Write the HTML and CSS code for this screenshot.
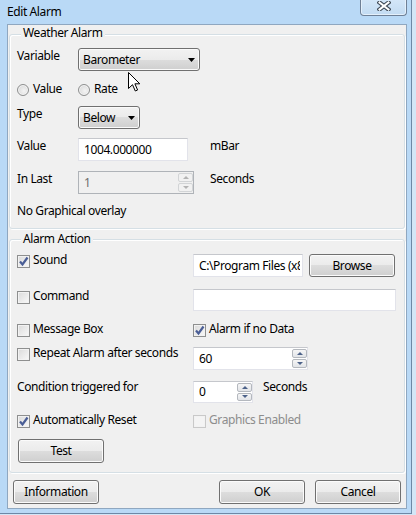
FILE: index.html
```html
<!DOCTYPE html>
<html>
<head>
<meta charset="utf-8">
<title>Edit Alarm</title>
<link rel="stylesheet" href="styles.css">
</head>
<body>
<div class="window">
  <div class="titlebar">
    <span class="title">Edit Alarm</span>
    <span class="close">
      <svg width="14" height="10" viewBox="0 0 14 10"><path d="M2.5 1.5 L11.5 8.5 M11.5 1.5 L2.5 8.5" stroke="#3f4a57" stroke-width="4.2" stroke-linecap="square" fill="none"/><path d="M2.5 1.5 L11.5 8.5 M11.5 1.5 L2.5 8.5" stroke="#ffffff" stroke-width="2" stroke-linecap="square" fill="none"/></svg>
    </span>
  </div>
  <div class="client">
    <div class="group g1">
      <div class="legend">Weather Alarm</div>
      <div class="row r-var">
        <span class="lbl">Variable</span>
        <div class="combo combo-wide"><span class="combo-text">Barometer</span><svg class="arrow" width="7" height="4" viewBox="0 0 7 4"><path d="M0 0 H7 L3.5 4 Z" fill="#000"/></svg></div>
      </div>
      <div class="row r-radio">
        <span class="lbl radio-item"><span class="radio"></span>Value</span>
        <span class="radio-item"><span class="radio"></span>Rate</span>
      </div>
      <div class="row r-type">
        <span class="lbl">Type</span>
        <div class="combo combo-small"><span class="combo-text">Below</span><svg class="arrow" width="7" height="4" viewBox="0 0 7 4"><path d="M0 0 H7 L3.5 4 Z" fill="#000"/></svg></div>
      </div>
      <div class="row r-val">
        <span class="lbl">Value</span>
        <div class="ctl-col"><div class="textbox tb-value">1004.000000</div></div>
        <span class="unit">mBar</span>
      </div>
      <div class="row r-last">
        <span class="lbl">In Last</span>
        <div class="ctl-col">
          <div class="spin spin-last disabled">
            <span class="spin-val">1</span>
            <span class="spin-btns"><span class="sb"><i class="tri up"></i></span><span class="sb"><i class="tri down"></i></span></span>
          </div>
        </div>
        <span class="unit">Seconds</span>
      </div>
      <div class="row r-nog">
        <span class="plain">No Graphical overlay</span>
      </div>
    </div>

    <div class="group g2">
      <div class="legend">Alarm Action</div>
      <div class="row r-sound">
        <span class="lcol check-item"><span class="check on"><svg width="11" height="11" viewBox="0 0 11 11"><path d="M2 5.5 L4.5 8.5 L9.5 1.5" stroke="#4a5e96" stroke-width="2.2" fill="none"/></svg></span>Sound</span>
        <div class="textbox tb-sound"><span class="clip">C:\Program Files (x86)</span></div>
        <span class="btn btn-browse">Browse</span>
      </div>
      <div class="row r-cmd">
        <span class="lcol check-item"><span class="check"></span>Command</span>
        <div class="textbox tb-cmd"></div>
      </div>
      <div class="row r-msg">
        <span class="lcol check-item"><span class="check"></span>Message Box</span>
        <span class="check-item"><span class="check on"><svg width="11" height="11" viewBox="0 0 11 11"><path d="M2 5.5 L4.5 8.5 L9.5 1.5" stroke="#4a5e96" stroke-width="2.2" fill="none"/></svg></span>Alarm if no Data</span>
      </div>
      <div class="row r-rep">
        <span class="lcol check-item"><span class="check"></span>Repeat Alarm after seconds</span>
        <div class="spin spin-rep">
          <span class="spin-val">60</span>
          <span class="spin-btns"><span class="sb"><i class="tri up"></i></span><span class="sb"><i class="tri down"></i></span></span>
        </div>
      </div>
      <div class="row r-cond">
        <span class="lcol">Condition triggered for</span>
        <div class="spin spin-cond">
          <span class="spin-val">0</span>
          <span class="spin-btns"><span class="sb"><i class="tri up"></i></span><span class="sb"><i class="tri down"></i></span></span>
        </div>
        <span class="unit2">Seconds</span>
      </div>
      <div class="row r-auto">
        <span class="lcol check-item"><span class="check on"><svg width="11" height="11" viewBox="0 0 11 11"><path d="M2 5.5 L4.5 8.5 L9.5 1.5" stroke="#4a5e96" stroke-width="2.2" fill="none"/></svg></span>Automatically Reset</span>
        <span class="check-item disabled-text"><span class="check dis"></span>Graphics Enabled</span>
      </div>
      <span class="btn btn-test">Test</span>
    </div>

    <div class="actions">
      <span class="btn">Information</span>
      <span class="spacer"></span>
      <span class="btn">OK</span>
      <span class="btn btn-cancel">Cancel</span>
    </div>
  </div>

  <svg class="cursor" width="13" height="20" viewBox="0 0 13 20"><path d="M0.5 0.5 L0.5 16.5 L4.5 12.7 L7.3 19 L9.6 18 L6.9 11.8 L11.8 11.8 Z" fill="#fff" stroke="#000" stroke-width="1" stroke-linejoin="miter"/></svg>
</div>
</body>
</html>
```

FILE: styles.css
```css
html, body {
  margin: 0;
  padding: 0;
}
body {
  background: #d3e6f7;
  font-family: "Noto Sans", "Open Sans", sans-serif;
  font-size: 12px;
  letter-spacing: -0.4px;
  color: #000;
}
.window {
  position: relative;
  width: 412px;
  height: 514px;
  box-sizing: border-box;
  background: #b9d9f6;
  border-right: 1px solid #6d88a6;
  border-bottom: 1px solid #6d88a6;
  display: flex;
  flex-direction: column;
}
.titlebar {
  height: 24px;
  flex: none;
  display: flex;
  justify-content: space-between;
  align-items: flex-start;
  padding: 0 4px 0 7px;
}
.title {
  line-height: 16px;
  margin-top: 4px;
}
.close {
  width: 47px;
  height: 16px;
  box-sizing: border-box;
  border: 1px solid #6f8096;
  border-top: none;
  border-radius: 0 0 4px 4px;
  background: linear-gradient(#d3e6f8, #c2dbf2);
  box-shadow: inset 0 -1px 0 #e4f0fb, inset 1px 0 0 #e4f0fb, inset -1px 0 0 #e4f0fb;
  display: flex;
  justify-content: center;
  align-items: flex-start;
  padding-top: 1px;
}
.client {
  margin-left: 7px;
  width: 400px;
  height: 485px;
  box-sizing: border-box;
  border: 1px solid #8fa7c0;
  background: #f0f0f0;
  padding-top: 9px;
  display: flex;
  flex-direction: column;
}
.group {
  margin: 0 1px;
  border: 1px solid #d5dfe5;
  border-radius: 3px;
  padding: 0 7px 9px 7px;
  box-shadow: inset 1px 1px 0 #fff, 1px 1px 0 #fff;
}
.g2 {
  margin-top: 10px;
}
.legend {
  width: max-content;
  margin: -10px 0 0 4px;
  padding: 0 2px;
  background: #f0f0f0;
  line-height: 16px;
  height: 15px;
}
.g2 .legend {
  margin-top: -9px;
}
.row {
  display: flex;
  align-items: flex-start;
}
.lbl {
  width: 61px;
  flex: none;
  line-height: 16px;
}
.plain, .unit, .unit2 {
  line-height: 16px;
}
.ctl-col {
  width: 132px;
  flex: none;
}
/* group 1 rows */
.r-var { margin-top: 8px; }
.r-radio { margin-top: 10px; }
.r-type { margin-top: 9px; }
.r-val { margin-top: 9px; }
.r-last { margin-top: 10px; }
.r-nog { margin-top: 9px; }

/* combo */
.combo {
  height: 23px;
  box-sizing: border-box;
  border: 1px solid #707070;
  border-radius: 3px;
  background: linear-gradient(#f2f2f2 0%, #ebebeb 50%, #dddddd 50%, #cfcfcf 100%);
  box-shadow: inset 0 0 0 1px #fafafa;
  display: flex;
  align-items: center;
  padding: 0 4px 0 4px;
}
.combo-wide { width: 122px; }
.combo-small { width: 62px; }
.combo-text {
  flex: 1;
  line-height: 16px;
}
.arrow {
  flex: none;
  margin-top: 1px;
}

/* radio */
.radio-item {
  display: flex;
  align-items: flex-start;
  line-height: 16px;
}
.radio {
  width: 12px;
  height: 12px;
  box-sizing: border-box;
  border-radius: 50%;
  border: 1px solid #8e8f8f;
  background: radial-gradient(circle at 60% 60%, #f4f4f4 0%, #dcdcdc 70%, #cfcfcf 100%);
  box-shadow: inset 0 0 0 1px #f5f5f5;
  margin: 3px 4px 0 0;
  flex: none;
}

/* textbox */
.textbox {
  height: 23px;
  box-sizing: border-box;
  border: 1px solid #e2e3ea;
  border-top-color: #c5c7cc;
  background: #fff;
  display: flex;
  align-items: center;
  padding-left: 5px;
  line-height: 16px;
  overflow: hidden;
  white-space: nowrap;
}
.tb-value { width: 110px; }
.tb-sound {
  width: 110px;
  margin-top: 2px;
  padding-right: 2px;
}
.clip {
  display: block;
  flex: 1;
  min-width: 0;
  overflow: hidden;
  white-space: nowrap;
}
.tb-cmd {
  width: 203px;
  height: 22px;
  margin-top: 1px;
}

/* spin */
.spin {
  height: 23px;
  box-sizing: border-box;
  border: 1px solid #e2e3ea;
  border-top-color: #c5c7cc;
  background: #fff;
  display: flex;
  align-items: stretch;
}
.spin.disabled {
  background: #f0f0f0;
  border-color: #afb3b8;
  color: #6d6d6d;
}
.spin-last { width: 116px; }
.spin-rep { width: 115px; margin-top: 2px; }
.spin-cond { width: 60px; height: 22px; margin-top: 2px; }
.spin-val {
  flex: 1;
  padding-left: 5px;
  line-height: 16px;
  align-self: center;
}
.spin-btns {
  width: 15px;
  flex: none;
  display: flex;
  flex-direction: column;
  gap: 1px;
  padding: 1px 0 1px 0;
}
.sb {
  flex: 1;
  box-sizing: border-box;
  border: 1px solid #b4b8be;
  border-radius: 2px;
  background: linear-gradient(#f6f6f6, #e2e4e8);
  display: flex;
  justify-content: center;
  align-items: center;
}
.disabled .sb {
  border-color: #d2d4d6;
  background: #f1f1f1;
}
.tri {
  width: 0;
  height: 0;
  border-left: 3px solid transparent;
  border-right: 3px solid transparent;
}
.tri.up { border-bottom: 3px solid #4d6289; }
.tri.down { border-top: 3px solid #4d6289; }
.disabled .tri.up { border-bottom-color: #b3b3b3; }
.disabled .tri.down { border-top-color: #b3b3b3; }

.unit2 { margin-left: 10px; }

/* group 2 */
.lcol {
  width: 176px;
  flex: none;
  line-height: 16px;
}
.check-item {
  display: flex;
  align-items: flex-start;
  line-height: 16px;
}
.check {
  width: 13px;
  height: 13px;
  box-sizing: border-box;
  border: 1px solid #8e8f8f;
  background: linear-gradient(135deg, #dadada, #f9f9f9);
  box-shadow: inset 0 0 0 1px #f2f2f2;
  margin: 3px 3px 0 0;
  flex: none;
  display: flex;
  justify-content: center;
  align-items: center;
}
.check.dis {
  border-color: #c9c9c9;
  background: #f4f4f4;
}
.disabled-text { color: #8d8d8d; }

.r-sound { margin-top: 6px; }
.r-cmd { margin-top: 11px; }
.r-msg { margin-top: 10px; }
.r-rep { margin-top: 8px; }
.r-cond { margin-top: 9px; }
.r-auto { margin-top: 9px; }

/* buttons */
.btn {
  width: 86px;
  height: 24px;
  box-sizing: border-box;
  border: 1px solid #707070;
  border-radius: 3px;
  background: linear-gradient(#f2f2f2 0%, #ebebeb 50%, #dddddd 50%, #cfcfcf 100%);
  box-shadow: inset 0 0 0 1px #fbfbfb;
  display: flex;
  justify-content: center;
  align-items: center;
  line-height: 16px;
  flex: none;
}
.btn-browse {
  margin: 2px 0 0 6px;
  height: 23px;
}
.btn-test {
  margin: 11px 0 0 1px;
}
.actions {
  display: flex;
  margin-top: 7px;
  padding: 0 5px;
}
.spacer { flex: 1; }
.btn-cancel { margin-left: 10px; }

.cursor {
  position: absolute;
  left: 128px;
  top: 72px;
}
```
